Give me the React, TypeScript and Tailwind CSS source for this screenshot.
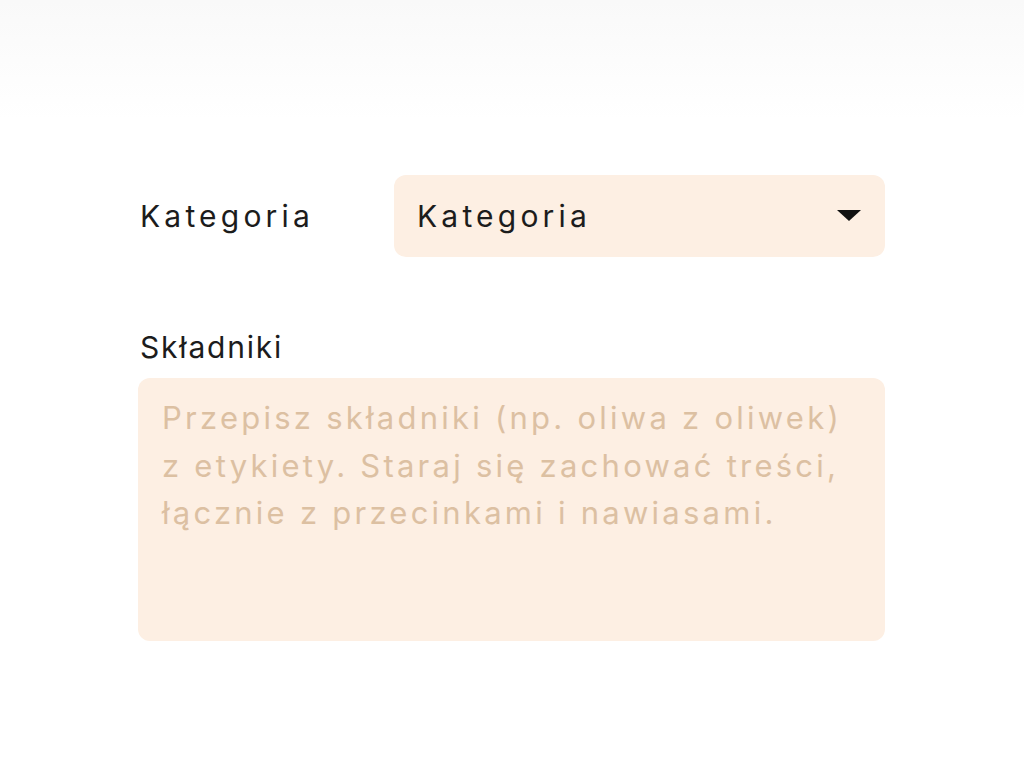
export default function App(): JSX.Element {
    return (
        <div className="w-[1024px] h-[778px] bg-white font-['Inter',sans-serif] text-[#1c1c1c]">
            <div className="h-[120px] bg-gradient-to-b from-[#f9f9f9] to-white"></div>
            <div className="pl-[140px] pr-[139px] pt-[55px]">
                <div className="flex items-center">
                    <div className="w-[254px] text-[30px] tracking-[4.2px]">Kategoria</div>
                    <div className="flex-1 h-[82px] rounded-xl bg-[#fdefe3] flex items-center justify-between pl-[23px] pr-[24px]">
                        <span className="text-[30px] tracking-[4.2px]">Kategoria</span>
                        <svg width="24" height="12" viewBox="0 0 24 12">
                            <path d="M0 0 L24 0 L12 11 Z" fill="#111" />
                        </svg>
                    </div>
                </div>
                <div className="mt-[72px] text-[30px] leading-[36px] tracking-[1.8px]">Składniki</div>
                <div className="mt-[13px] -ml-[2px] h-[263px] rounded-xl bg-[#fdefe3] pl-[24px] pr-[20px] pt-[16px] text-[31px] leading-[47.5px] tracking-[3.25px] text-[#dcc0a2] whitespace-nowrap">
                    <div>Przepisz składniki (np. oliwa z oliwek)</div>
                    <div>z etykiety. Staraj się zachować treści,</div>
                    <div>łącznie z przecinkami i nawiasami.</div>
                </div>
            </div>
        </div>
    )
}
